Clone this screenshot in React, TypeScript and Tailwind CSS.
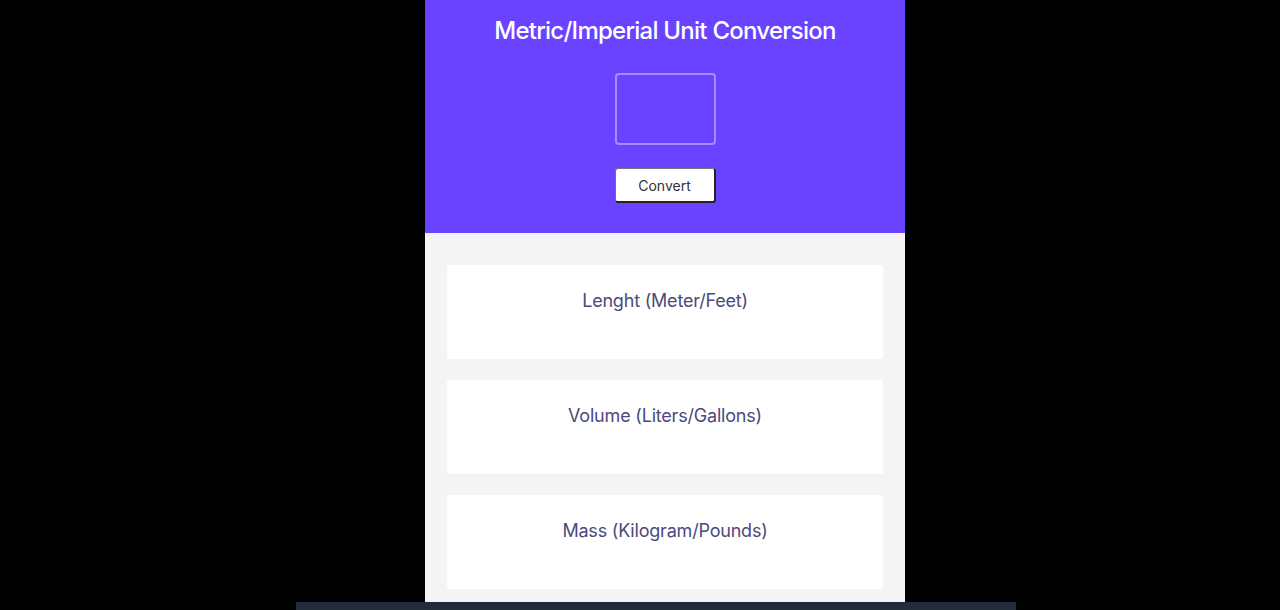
const categories = ['Lenght (Meter/Feet)', 'Volume (Liters/Gallons)', 'Mass (Kilogram/Pounds)'];

export default function App() {
  return (
    <div className="flex h-[610px] flex-col items-start overflow-hidden bg-black font-['Inter',sans-serif]">
      <div className="ml-[425px] flex w-[480px] shrink-0 flex-col">
        <header className="flex h-[233px] flex-col items-center bg-[#6943ff] pt-[15px]">
          <h1 className="text-[24px] leading-[32px] font-medium tracking-[-0.75px] text-white">
            Metric/Imperial Unit Conversion
          </h1>
          <input
            type="text"
            className="mt-[26px] h-[72px] w-[101px] rounded-[4px] border-2 border-[#a58dff] bg-transparent text-center text-white outline-none"
          />
          <button
            type="button"
            className="mt-[23px] h-[35px] w-[101px] rounded-[3px] border border-[#767676] border-r-2 border-b-2 border-r-[#222] border-b-[#222] bg-white text-[14px] text-[#333]"
          >
            Convert
          </button>
        </header>
        <main className="flex h-[369px] flex-col gap-[21px] bg-[#f4f4f4] px-[22px] pt-[32px]">
          {categories.map((c) => (
            <section key={c} className="flex h-[94px] justify-center rounded-[2px] bg-white pt-[24px]">
              <h2 className="text-[18px] leading-[24px] tracking-[-0.2px] text-[#4b4a7b]">{c}</h2>
            </section>
          ))}
        </main>
      </div>
      <div className="ml-[296px] h-[8px] w-[720px] shrink-0 bg-[#232c39]" />
    </div>
  );
}
